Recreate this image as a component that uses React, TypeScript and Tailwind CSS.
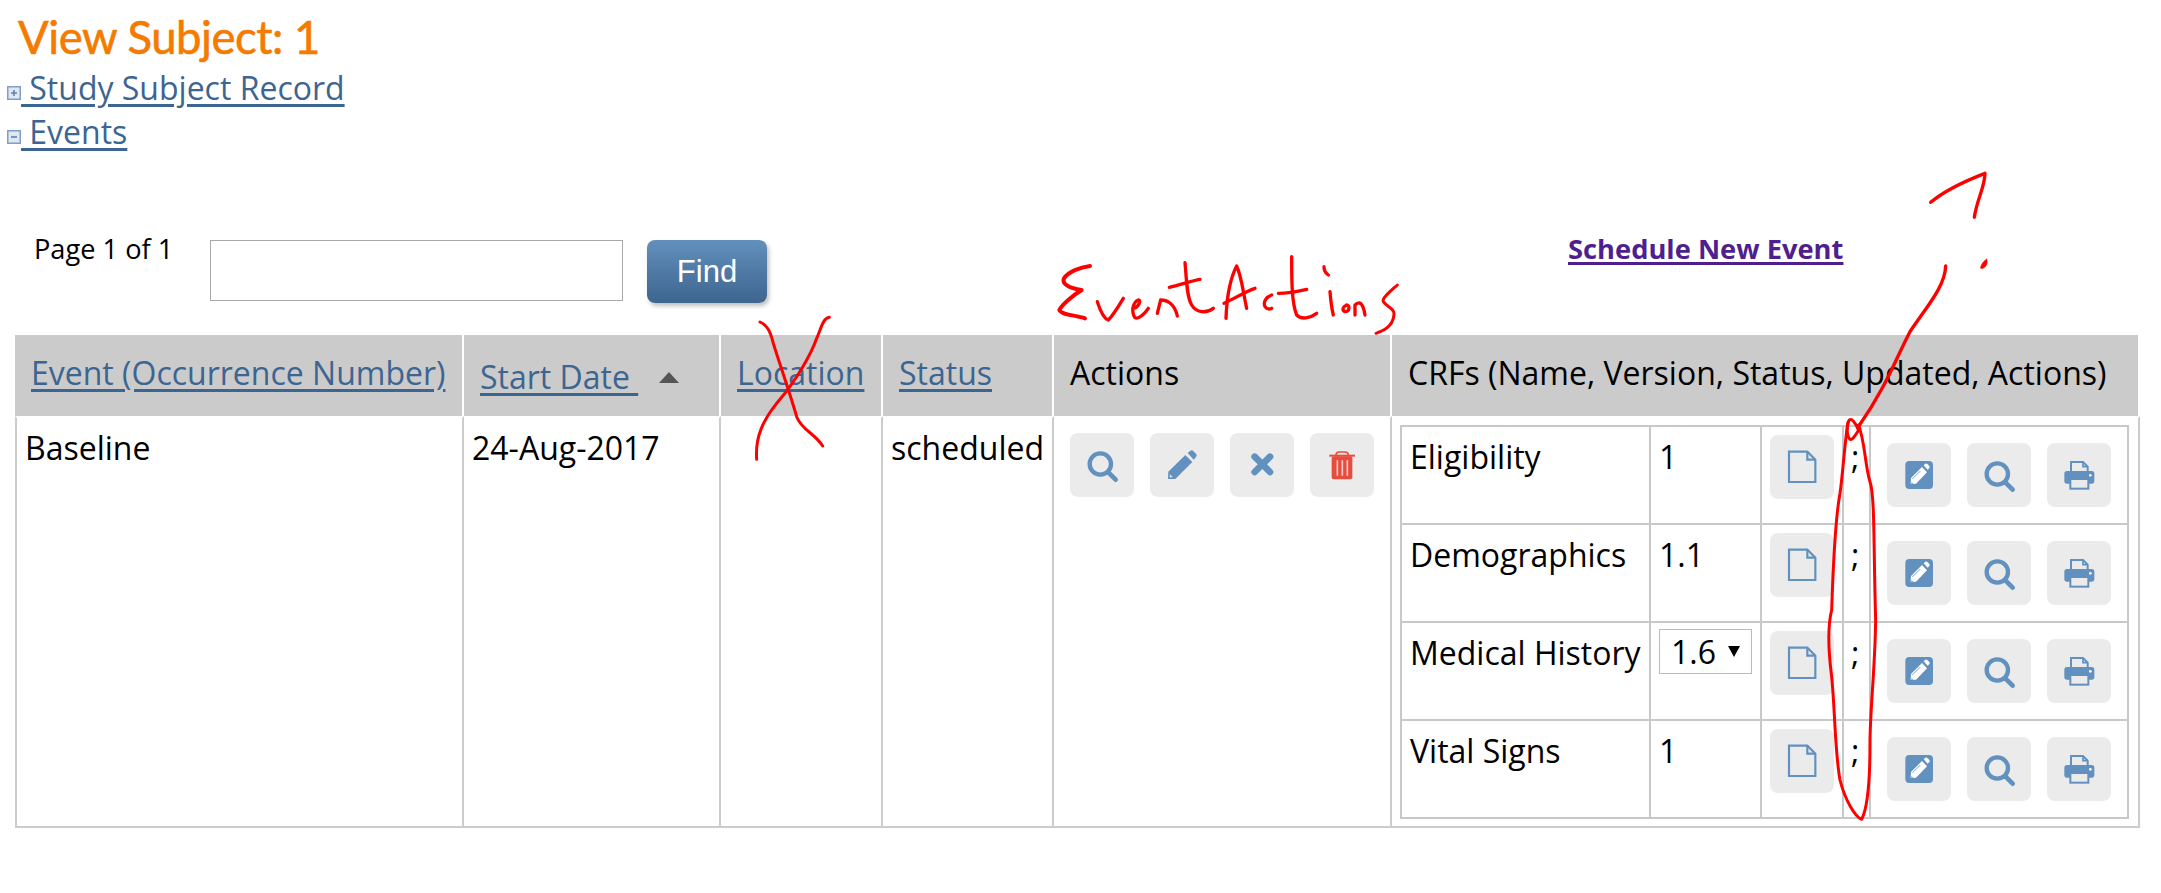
import React from "react";

const B = "#6291bf";
const BG = "#ebebeb";

function Btn({ children, className = "" }: { children: React.ReactNode; className?: string }) {
  return (
    <a className={`block h-16 w-16 shrink-0 rounded-lg bg-[#ebebeb] ${className}`}>
      <svg viewBox="0 0 192 192" className="h-16 w-16">{children}</svg>
    </a>
  );
}

const SearchI = () => (
  <Btn>
    <circle cx="91" cy="93" r="32" fill="none" stroke={B} strokeWidth="13" />
    <path d="M115 118 L137 140" stroke={B} strokeWidth="14" strokeLinecap="round" />
  </Btn>
);
const PencilI = () => (
  <Btn>
    <path d="M54 138 L55 116 L106 66 L127 87 L76 138 Z" fill={B} />
    <path d="M113 60 L121 53 Q126 50 130 54 L139 64 Q142 68 138 72 L131 80 Z" fill={B} />
    <path d="M60 124 L59 133 L68 133 Z" fill={BG} />
  </Btn>
);
const XI = () => (
  <Btn>
    <path d="M74 71 L120 117 M120 71 L74 117" stroke={B} strokeWidth="20" strokeLinecap="round" />
  </Btn>
);
const TrashI = () => (
  <Btn>
    <path d="M58 68 H135" stroke="#e74c3c" strokeWidth="6" />
    <path d="M78 66 Q78 57 88 57 H105 Q115 57 115 66" stroke="#e74c3c" strokeWidth="5" fill="none" />
    <rect x="65" y="70" width="62" height="69" rx="6" fill="#e74c3c" />
    <path d="M82 82 V128 M97 82 V128 M112 82 V128" stroke="#f6c9c4" strokeWidth="5" />
  </Btn>
);
const DocI = () => (
  <Btn>
    <path d="M57 50 H112 L136 74 V141 H57 Z" fill="none" stroke={B} strokeWidth="6.5" />
    <path d="M112 50 V74 H136" fill="none" stroke={B} strokeWidth="6.5" />
  </Btn>
);
const EditI = () => (
  <Btn>
    <rect x="55" y="54" width="83" height="84" rx="12" fill={B} />
    <path d="M71 123 L72 105 L105 72 L120 88 L87 122 Z" fill="#fff" />
    <path d="M110 67 L115 62 Q118 60 121 63 L127 69 Q129 72 127 75 L122 80 Z" fill="#fff" />
    <path d="M76 108 L100 84" stroke={B} strokeWidth="2.5" />
    <path d="M73 117 L73 122 L79 122 Z" fill={B} />
  </Btn>
);
const PrintI = () => (
  <Btn>
    <path d="M72 90 V57 H108 L122 71 V90" fill={BG} stroke={B} strokeWidth="6" />
    <path d="M108 57 V71 H122" fill="none" stroke={B} strokeWidth="5" />
    <rect x="52" y="84" width="90" height="38" rx="8" fill={B} />
    <rect x="70" y="108" width="54" height="29" fill={BG} stroke={B} strokeWidth="6" />
    <circle cx="130" cy="97" r="4" fill="#fff" />
  </Btn>
);

const crfs = [
  { name: "Eligibility", version: "1" },
  { name: "Demographics", version: "1.1" },
  { name: "Medical History", version: "select" },
  { name: "Vital Signs", version: "1" },
];

function Ink() {
  return (
    <svg
      viewBox="0 0 2161 893"
      className="pointer-events-none absolute left-0 top-0 h-[893px] w-[2161px]"
      fill="none"
      stroke="#ff0000"
      strokeLinecap="round"
      strokeLinejoin="round"
    >
      <g transform="translate(1040 250) scale(0.33333)" strokeWidth="10">
        <path d="M150 48 C120 52 85 65 72 85 C65 100 85 115 125 120 C100 135 65 165 58 180 C65 195 105 195 135 205" strokeWidth="12" />
        <path d="M172 155 C180 180 190 205 205 210 C220 195 235 170 250 145" />
        <path d="M278 175 C295 175 305 150 295 150 C280 155 272 185 285 203 C295 210 315 190 325 175" />
        <path d="M352 190 L362 150 C385 150 405 165 412 198" />
        <path d="M435 38 C440 90 440 140 455 165 C470 190 500 190 520 175" />
        <path d="M388 112 C420 105 455 92 480 88" />
        <path d="M558 205 C560 150 568 90 590 48 C605 80 610 130 620 175" />
        <path d="M552 160 C585 145 615 125 645 115" />
        <path d="M695 135 C680 140 668 155 675 170 C680 178 690 178 695 175" />
        <path d="M755 20 C755 90 755 160 770 195 C785 210 810 205 830 190" />
        <path d="M715 130 C740 130 770 125 800 118" />
        <path d="M852 50 C852 60 858 70 865 75" />
        <path d="M870 125 C872 150 875 175 880 195" />
        <path d="M920 165 C908 170 905 180 915 185 C930 185 930 165 920 165" />
        <path d="M945 195 L945 165 C955 155 965 155 972 180 L975 195" />
        <path d="M1072 105 C1050 125 1025 145 1030 155 C1040 170 1062 175 1062 190 C1062 220 1040 240 1008 250" strokeWidth="9" />
      </g>
      <g transform="translate(1830 160) scale(0.33333)" strokeWidth="10">
        <path d="M302 127 C340 95 400 65 465 40 C465 80 440 120 433 172" />
        <path d="M347 318 C345 380 290 440 240 515 C200 590 170 680 85 800" />
        <path d="M470 298 C462 302 452 314 452 325 C462 328 476 314 470 298 Z" fill="#ff0000" strokeWidth="2" />
      </g>
      <g transform="translate(740 310) scale(0.33333)" strokeWidth="9">
        <path d="M60 36 C80 45 90 60 100 100 C115 150 150 250 170 320 C185 360 225 370 248 408" />
        <path d="M268 22 C250 24 245 50 230 85 C215 130 170 210 110 280 C70 330 45 380 50 448" />
      </g>
      <g transform="translate(1820 410) scale(0.33333)" strokeWidth="9">
        <path d="M115 60 C105 35 95 25 88 30 C78 45 80 80 90 88 C100 90 105 75 120 55" />
        <path d="M115 45 C135 90 135 170 150 215 C165 260 160 400 167 630 C165 780 150 900 150 1000 C150 1100 145 1190 125 1228 C105 1220 75 1170 60 1110 C45 1030 45 900 35 800 C22 700 25 640 35 600 C40 450 45 330 60 250 C70 180 75 80 85 35" />
      </g>
    </svg>
  );
}

function Plus({ minus = false }: { minus?: boolean }) {
  return (
    <svg viewBox="0 0 14 14" className="mb-[-4px] mr-0 inline-block h-[14px] w-[14px]">
      <rect x="0.75" y="0.75" width="12.5" height="12.5" fill="#dfe8f2" stroke="#7f9fc6" strokeWidth="1.5" />
      <path d={minus ? "M4 7 H10" : "M4 7 H10 M7 4 V10"} stroke="#5f82ad" strokeWidth="1.6" />
    </svg>
  );
}

const linkCls = "text-[#3d6591] underline decoration-[3px] underline-offset-[4px]";
const th = "whitespace-nowrap border-r-2 border-white bg-[#cbcbcb] px-[16px] pb-[5px] text-left align-middle font-normal";
const td = "border-r-2 border-b-2 border-t-2 border-b-[#cccccc] border-r-[#cccccc] border-t-white align-top";
const itd = "border-2 border-[#c8c8c8] align-top";

export default function App() {
  return (
    <div className="relative h-[893px] w-[2161px] overflow-hidden bg-white font-['Open_Sans',sans-serif] text-[32px] leading-[44px] text-black">
      <h1 className="pl-[18px] pt-[7px] font-['Lato',sans-serif] text-[45.5px] leading-[60px] tracking-[-0.5px] text-[#f47b00] [-webkit-text-stroke:0.6px_#f47b00]">
        View Subject: 1
      </h1>
      <div className="mt-[-1px] pl-[7px]">
        <div className="h-[44px]">
          <Plus />
          <a className={linkCls}>&nbsp;Study Subject Record</a>
        </div>
        <div className="h-[44px]">
          <Plus minus />
          <a className={linkCls}>&nbsp;Events</a>
        </div>
      </div>

      <div className="mt-[86px] flex h-[64px] items-start pl-[34px]">
        <span className="mt-[-9px] w-[176px] text-[27.2px] leading-[36px]">Page 1 of 1</span>
        <input className="h-[61px] w-[413px] border border-[#aaaaaa] bg-white" />
        <button className="ml-[24px] h-[63px] w-[120px] rounded-lg bg-gradient-to-b from-[#6290bd] to-[#3e658f] font-['Liberation_Sans',sans-serif] text-[31px] text-white shadow-[2px_3px_4px_rgba(0,0,0,0.25)]">
          Find
        </button>
        <a className="ml-[801px] mt-[-9px] text-[27.3px] font-bold leading-[36px] text-[#4f1f8f] underline decoration-[3px] underline-offset-[3px]">
          Schedule New Event
        </a>
      </div>

      <table className="ml-[15px] mt-[31px] w-[2125px] table-fixed border-separate border-spacing-0">
        <colgroup>
          <col className="w-[449px]" />
          <col className="w-[257px]" />
          <col className="w-[162px]" />
          <col className="w-[171px]" />
          <col className="w-[338px]" />
          <col />
        </colgroup>
        <thead>
          <tr className="h-[81px]">
            <th className={th}><a className={linkCls}>Event (Occurrence Number)</a></th>
            <th className={th}>
              <a className={`${linkCls} relative top-[4px]`}>Start Date&nbsp;</a>
              <span className="relative top-[-2px] ml-[21px] inline-block h-0 w-0 border-x-[10px] border-b-[11px] border-x-transparent border-b-[#555555]" />
            </th>
            <th className={th}><a className={linkCls}>Location</a></th>
            <th className={th}><a className={linkCls}>Status</a></th>
            <th className={th}>Actions</th>
            <th className={`${th} border-r-0`}>CRFs (Name, Version, Status, Updated, Actions)</th>
          </tr>
        </thead>
        <tbody>
          <tr className="h-[412px]">
            <td className={`${td} border-l-2 border-l-[#cccccc] pl-[8px] pt-[8px]`}>Baseline</td>
            <td className={`${td} pl-[8px] pt-[8px]`}>24-Aug-2017</td>
            <td className={td} />
            <td className={`${td} pl-[8px] pt-[8px]`}>scheduled</td>
            <td className={td}>
              <div className="flex gap-4 pl-[16px] pt-[15px]">
                <SearchI />
                <PencilI />
                <XI />
                <TrashI />
              </div>
            </td>
            <td className={`${td} pl-[8px] pr-[8px] pt-[7px]`}>
              <table className="w-[729px] table-fixed border-collapse">
                <colgroup>
                  <col className="w-[249px]" />
                  <col className="w-[111px]" />
                  <col className="w-[82px]" />
                  <col className="w-[27px]" />
                  <col />
                </colgroup>
                <tbody>
                  {crfs.map((c) => (
                    <tr key={c.name} className="h-[98px]">
                      <td className={`${itd} pl-[8px] pt-[8px]`}>{c.name}</td>
                      <td className={`${itd} pl-[8px] pt-[8px]`}>
                        {c.version === "select" ? (
                          <div className="relative mt-[-2px] h-[45px] w-[93px]">
                            <select className="h-[45px] w-[93px] appearance-none rounded-none border border-[#bbbbbb] bg-white pl-[11px] text-[32px] leading-[40px]">
                              <option>1.6</option>
                            </select>
                            <span className="pointer-events-none absolute left-[69px] top-[17px] h-0 w-0 border-x-[6px] border-t-[11px] border-x-transparent border-t-black" />
                          </div>
                        ) : (
                          c.version
                        )}
                      </td>
                      <td className={`${itd} pl-[8px] pt-[8px]`}><DocI /></td>
                      <td className={`${itd} pl-[7px] pt-[8px] text-[32px]`}>;</td>
                      <td className={itd}>
                        <div className="flex gap-4 pl-[16px] pt-[16px]">
                          <EditI />
                          <SearchI />
                          <PrintI />
                        </div>
                      </td>
                    </tr>
                  ))}
                </tbody>
              </table>
            </td>
          </tr>
        </tbody>
      </table>
      <Ink />
    </div>
  );
}
